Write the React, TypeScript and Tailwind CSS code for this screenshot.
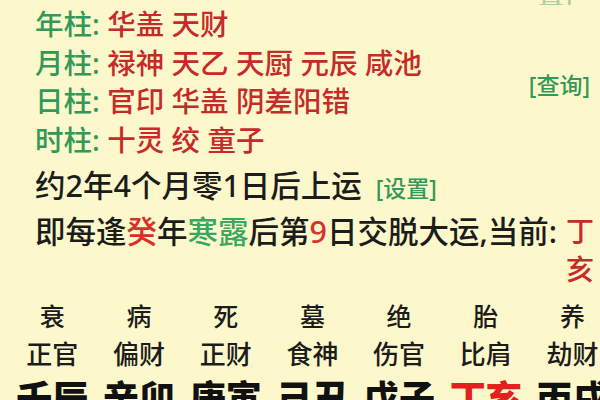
import React from 'react';

const GREEN = 'text-[#34985a]';
const RED = 'text-[#c62a2a]';

export default function App() {
  const pillars = [
    { name: '年柱:', items: '华盖 天财' },
    { name: '月柱:', items: '禄神 天乙 天厨 元辰 咸池' },
    { name: '日柱:', items: '官印 华盖 阴差阳错' },
    { name: '时柱:', items: '十灵 绞 童子' },
  ];
  const stages = ['衰', '病', '死', '墓', '绝', '胎', '养'];
  const gods = ['正官', '偏财', '正财', '食神', '伤官', '比肩', '劫财'];
  const ganzhi = ['壬辰', '辛卯', '庚寅', '己丑', '戊子', '丁亥', '丙戌'];

  return (
    <div
      className="w-[600px] h-[400px] overflow-hidden bg-[#fcf8cb] text-[#1c1c1c] font-medium"
      style={{ fontFamily: '"Noto Sans", "Noto Sans CJK SC", sans-serif' }}
    >
      {/* row scrolled above the top edge, only its bottom shows */}
      <div className="h-[5px] overflow-hidden relative">
        <div className="absolute bottom-0 left-0 flex text-[26px] leading-[26px] translate-y-[2px]">
          <span className="ml-[126px]">丑</span>
          <span className="ml-[84px]">亥</span>
          <span className="ml-[66px]">丑</span>
          <span className="ml-[74px]">亥</span>
          <span className={`ml-[84px] ${GREEN} opacity-40`}>[设置]</span>
        </div>
      </div>

      <div className="flex items-center pl-[35px] pr-[10px]">
        <div className="flex-1">
          {pillars.map((p) => (
            <div key={p.name} className="text-[28.5px] leading-[38.5px] whitespace-nowrap">
              <span className={GREEN}>{p.name}</span>{' '}
              <span className={RED}>{p.items}</span>
            </div>
          ))}
        </div>
        <div className={`${GREEN} text-[23px] mt-[6px]`}>[查询]</div>
      </div>

      <div className="pl-[35px] mt-[6px] text-[30.5px] leading-[40px] whitespace-nowrap">
        约2年4个月零1日后上运 <span className={`${GREEN} text-[23px] ml-[6px]`}>[设置]</span>
      </div>

      <div className="pl-[35px] mt-[4px] flex text-[30.5px] leading-[38px]">
        <span className="whitespace-nowrap">
          即每逢<span className="text-[#d8302a]">癸</span>年<span className="text-[#3aa862]">寒露</span>后第
          <span className="text-[#d8302a]">9</span>日交脱大运,当前:
        </span>
        <span className={`${RED} w-[28px] ml-auto mr-[6px] text-[28px]`}>丁亥</span>
      </div>

      <div className="pl-[9px] mt-[9px] grid grid-cols-[repeat(7,86.7px)] text-[26px] leading-[38px]">
        {stages.map((s) => (
          <div key={s} className="text-center text-[25px]">{s}</div>
        ))}
        {gods.map((g) => (
          <div key={g} className="text-center whitespace-nowrap">{g}</div>
        ))}
        {ganzhi.map((g) => (
          <div
            key={g}
            className={`text-center whitespace-nowrap font-black text-[36px] leading-[46px] mt-[3px] ${
              g === '丁亥' ? 'text-[#e0211c]' : 'text-[#111]'
            }`}
          >
            {g}
          </div>
        ))}
      </div>
    </div>
  );
}
